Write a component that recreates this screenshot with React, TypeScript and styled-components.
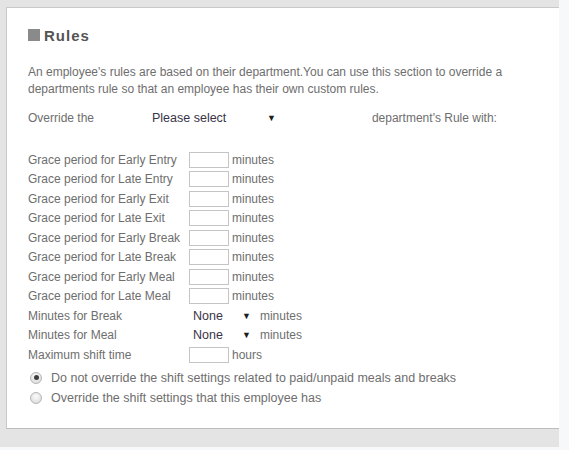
import React, { useState } from 'react';
import styled, { createGlobalStyle } from 'styled-components';

const GlobalStyle = createGlobalStyle`
  body {
    margin: 0;
    background: #f7f8fa;
    font-family: "Liberation Sans", Arial, sans-serif;
  }
`;

const Backdrop = styled.div`
  width: 559px;
  height: 447px;
  box-sizing: border-box;
  padding: 7px 0 0 6px;
  background: #e4e4e4;
  overflow: hidden;
`;

const Panel = styled.section`
  height: 422px;
  box-sizing: border-box;
  background: #fff;
  border: 1px solid #c9c9c9;
  border-right: none;
  border-bottom-color: #bdbdbd;
  padding: 18px 0 0 21px;
  color: #6e6e6e;
  font-size: 12px;
`;

const Title = styled.h2`
  display: flex;
  align-items: center;
  gap: 4px;
  margin: 0;
  height: 18px;
  font-size: 15px;
  font-weight: bold;
  letter-spacing: 1px;
  color: #555;
`;

const Square = styled.span`
  width: 12px;
  height: 12px;
  background: #8a8a8a;
`;

const Intro = styled.p`
  margin: 20px 0 0;
  width: 515px;
  line-height: 17px;
`;

const OverrideRow = styled.div`
  display: flex;
  align-items: center;
  height: 20px;
  margin-top: 10px;
`;

const Field = styled.div`
  display: flex;
  flex-direction: column;
  margin-top: 22px;
`;

const Row = styled.div`
  display: flex;
  align-items: center;
  height: 19.5px;
`;

const Label = styled.span<{ $width: number }>`
  width: ${(p) => p.$width}px;
  flex-shrink: 0;
  white-space: nowrap;
`;

const NumberBox = styled.input`
  width: 40px;
  height: 16px;
  box-sizing: border-box;
  margin: 0 3px 0 0;
  border: 1px solid #c4c4c4;
  padding: 0 2px;
  font: inherit;
`;

const Picker = styled.div<{ $pad: number; $after: number }>`
  display: flex;
  align-items: center;
  padding-left: ${(p) => p.$pad}px;
  margin-right: ${(p) => p.$after}px;
  flex-shrink: 0;
`;

const PickerSelect = styled.select<{ $width: number }>`
  appearance: none;
  width: ${(p) => p.$width}px;
  border: none;
  background: transparent;
  padding: 0;
  margin: 0;
  font: inherit;
  font-size: 12.5px;
  color: #3a3448;
  outline: none;
`;

const Arrow = styled.span`
  font-size: 9px;
  color: #1e1e1e;
`;

const RadioList = styled.div`
  display: flex;
  flex-direction: column;
  margin-top: 3px;
`;

const RadioRow = styled.label`
  display: flex;
  align-items: center;
  height: 20px;
  gap: 9px;
  padding-left: 2px;
  font-size: 12.5px;
`;

const Radio = styled.input`
  appearance: none;
  margin: 0;
  width: 12px;
  height: 12px;
  border-radius: 50%;
  border: 1px solid #b5b5b5;
  background: radial-gradient(circle at 50% 35%, #fbfbfb, #d6d6d6);
  display: grid;
  place-items: center;

  &:checked::after {
    content: '';
    width: 5px;
    height: 5px;
    border-radius: 50%;
    background: #3d3d3d;
  }
`;

const graceRows = [
  'Grace period for Early Entry',
  'Grace period for Late Entry',
  'Grace period for Early Exit',
  'Grace period for Late Exit',
  'Grace period for Early Break',
  'Grace period for Late Break',
  'Grace period for Early Meal',
  'Grace period for Late Meal',
];

const NoneSelect: React.FC = () => (
  <Picker $pad={4} $after={9}>
    <PickerSelect $width={49} defaultValue="none">
      <option value="none">None</option>
    </PickerSelect>
    <Arrow>▼</Arrow>
  </Picker>
);

const App: React.FC = () => {
  const [mode, setMode] = useState('keep');

  return (
    <>
      <GlobalStyle />
      <Backdrop>
        <Panel>
          <Title>
            <Square />
            Rules
          </Title>
          <Intro>
            An employee's rules are based on their department.You can use this section to override a
            departments rule so that an employee has their own custom rules.
          </Intro>

          <OverrideRow>
            <Label $width={124}>Override the</Label>
            <Picker $pad={0} $after={96}>
              <PickerSelect $width={115} defaultValue="">
                <option value="">Please select</option>
              </PickerSelect>
              <Arrow>▼</Arrow>
            </Picker>
            <span>department's Rule with:</span>
          </OverrideRow>

          <Field>
            {graceRows.map((label) => (
              <Row key={label}>
                <Label $width={161}>{label}</Label>
                <NumberBox type="text" />
                <span>minutes</span>
              </Row>
            ))}
            <Row>
              <Label $width={161}>Minutes for Break</Label>
              <NoneSelect />
              <span>minutes</span>
            </Row>
            <Row>
              <Label $width={161}>Minutes for Meal</Label>
              <NoneSelect />
              <span>minutes</span>
            </Row>
            <Row>
              <Label $width={161}>Maximum shift time</Label>
              <NumberBox type="text" />
              <span>hours</span>
            </Row>
          </Field>

          <RadioList>
            <RadioRow>
              <Radio
                type="radio"
                name="shift"
                checked={mode === 'keep'}
                onChange={() => setMode('keep')}
              />
              Do not override the shift settings related to paid/unpaid meals and breaks
            </RadioRow>
            <RadioRow>
              <Radio
                type="radio"
                name="shift"
                checked={mode === 'override'}
                onChange={() => setMode('override')}
              />
              Override the shift settings that this employee has
            </RadioRow>
          </RadioList>
        </Panel>
      </Backdrop>
    </>
  );
};

export default App;
